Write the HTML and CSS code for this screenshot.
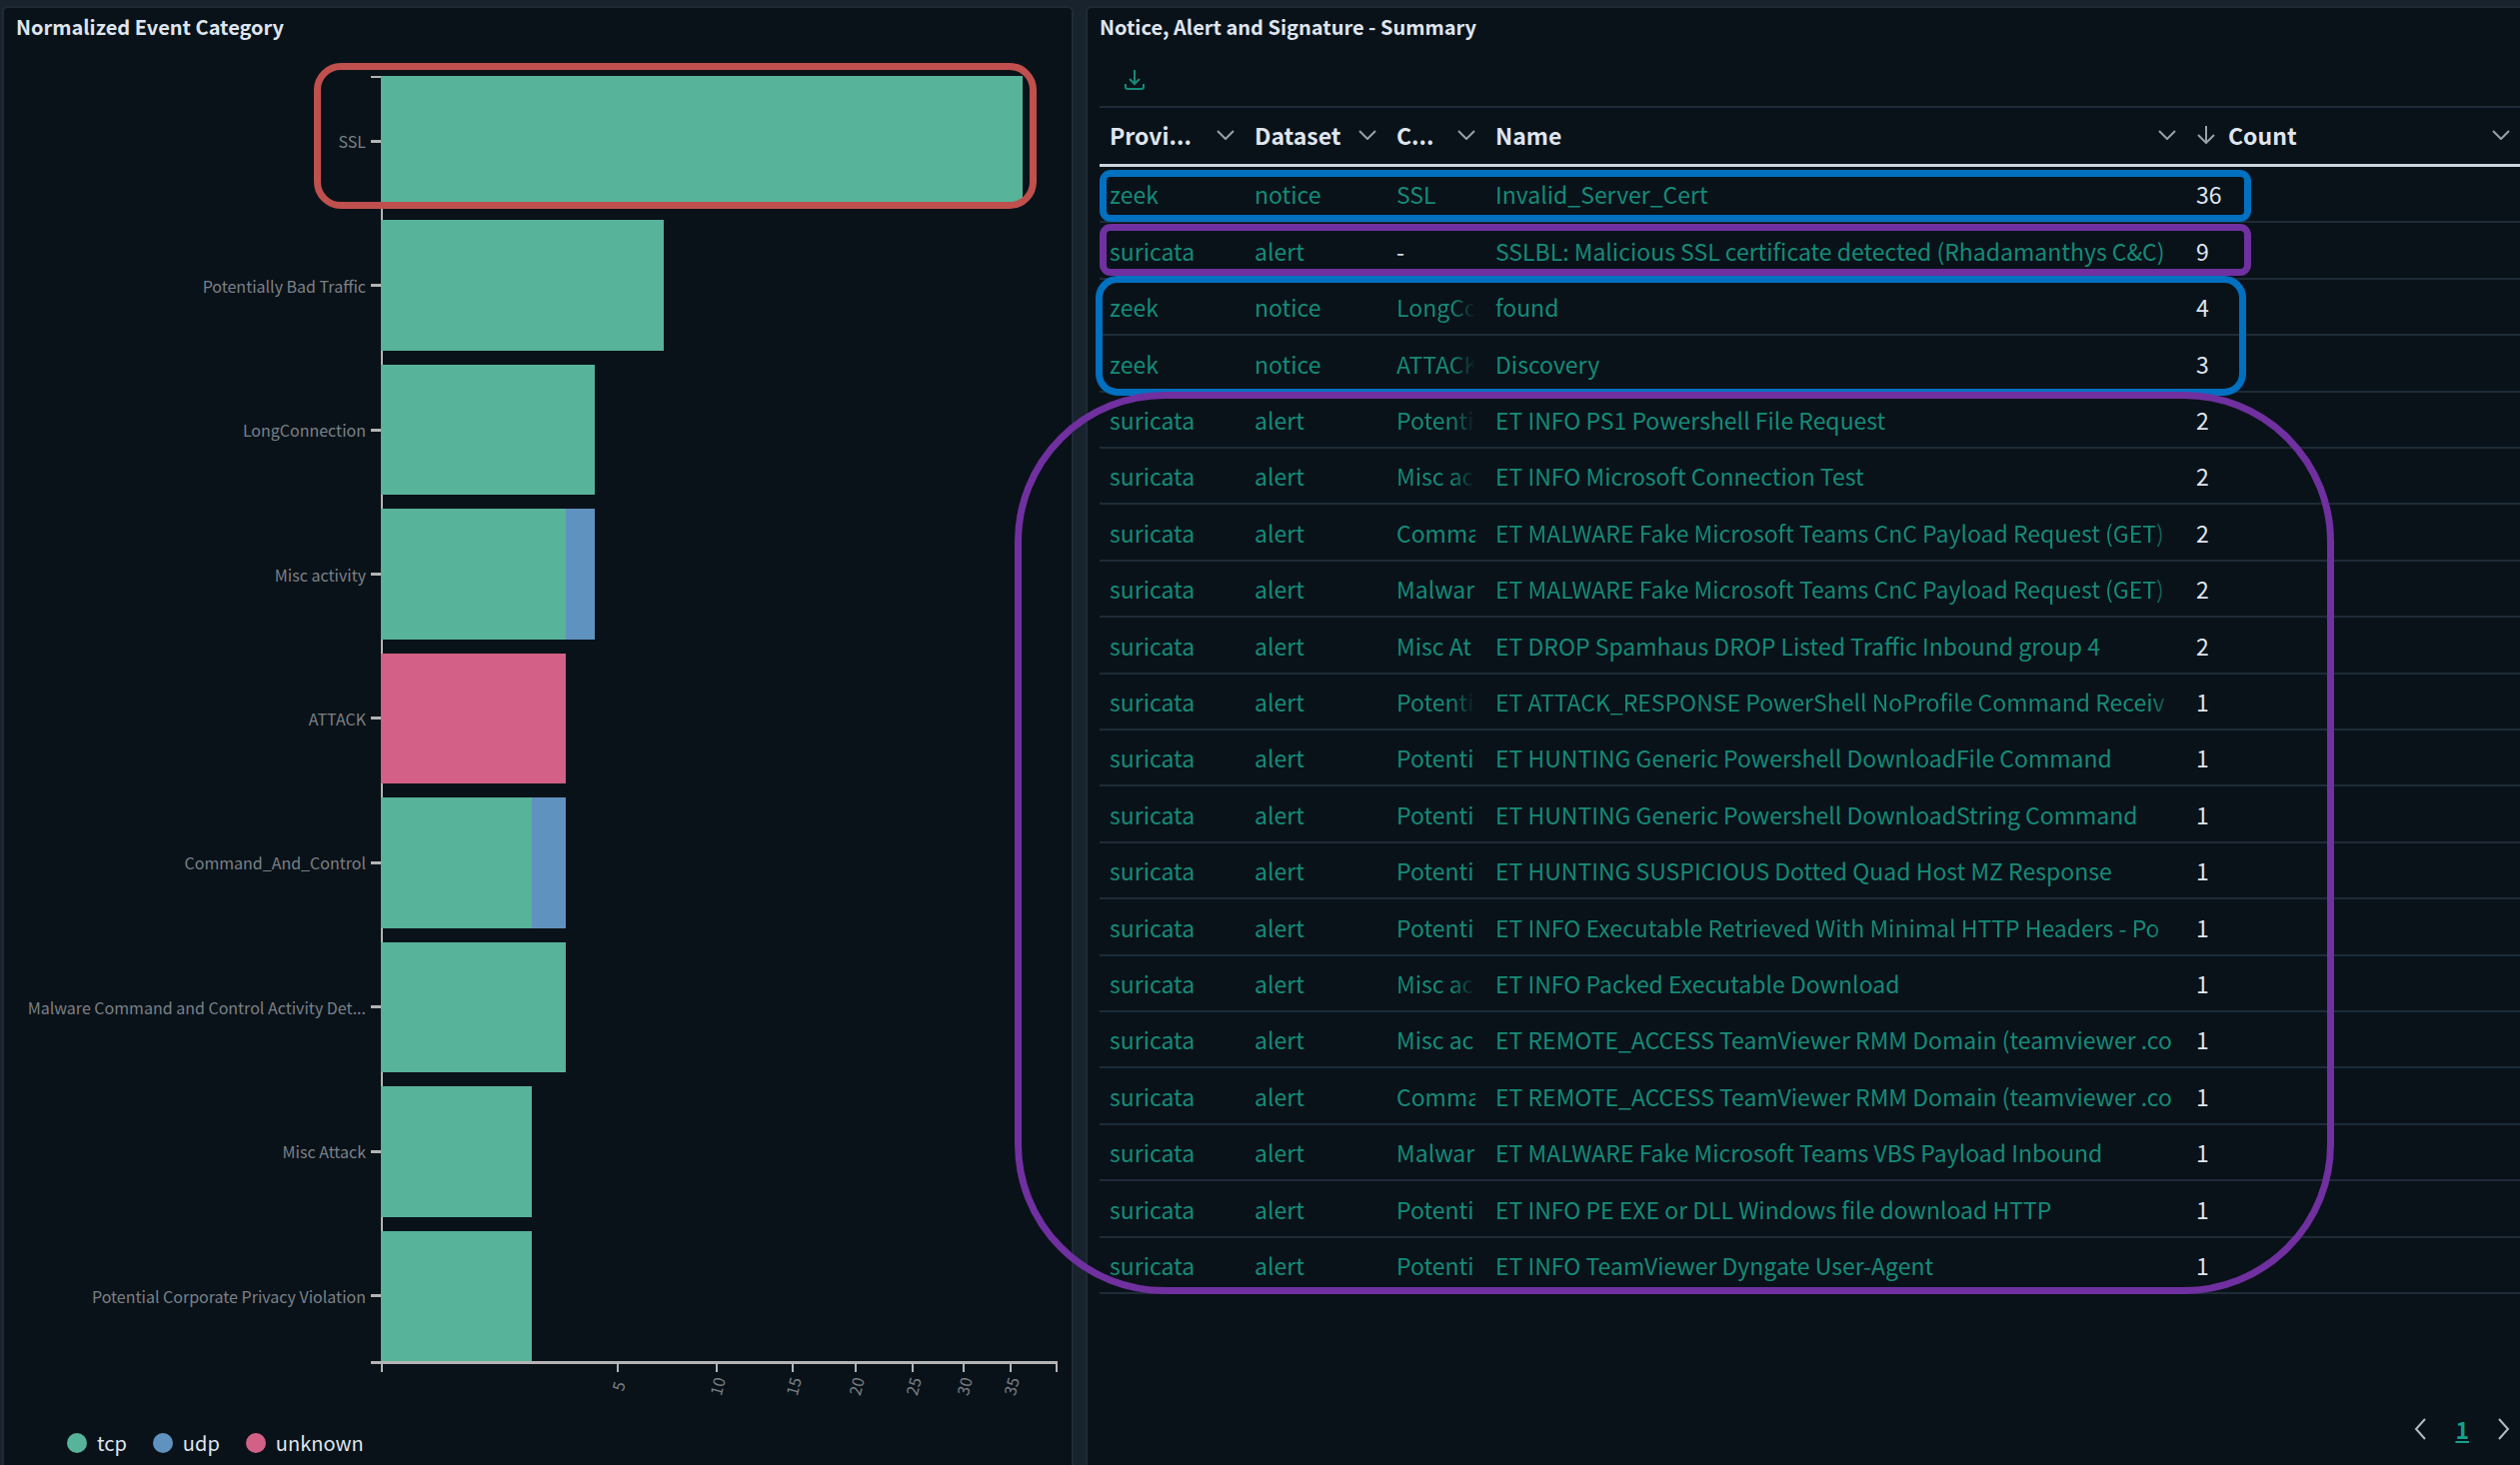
FILE: index.html
```html
<!DOCTYPE html>
<html lang="en">
<head>
<meta charset="utf-8">
<title>Event dashboard</title>
<meta name="viewport" content="width=device-width, initial-scale=1">
<link rel="stylesheet" href="styles.css">
</head>
<body>
<svg class="sprite" aria-hidden="true">
  <symbol id="chevron" viewBox="0 0 18 10"><path d="M1 1l8 8 8-8" fill="none" stroke="currentColor" stroke-width="2"/></symbol>
</svg>
<main class="dashboard">
  <section class="panel">
    <h2 class="panel-title">Normalized Event Category</h2>
    <div class="chart">
      <div class="plot">
        <div class="row"><span class="label">SSL</span><div class="track"><i class="bar tcp" style="width:94.8%"></i></div></div>
        <div class="row"><span class="label">Potentially Bad Traffic</span><div class="track"><i class="bar tcp" style="width:41.8%"></i></div></div>
        <div class="row"><span class="label">LongConnection</span><div class="track"><i class="bar tcp" style="width:31.6%"></i></div></div>
        <div class="row"><span class="label">Misc activity</span><div class="track"><i class="bar tcp" style="width:27.3%"></i><i class="bar udp" style="width:4.3%"></i></div></div>
        <div class="row"><span class="label">ATTACK</span><div class="track"><i class="bar unknown" style="width:27.3%"></i></div></div>
        <div class="row"><span class="label">Command_And_Control</span><div class="track"><i class="bar tcp" style="width:22.3%"></i><i class="bar udp" style="width:5%"></i></div></div>
        <div class="row"><span class="label">Malware Command and Control Activity Det...</span><div class="track"><i class="bar tcp" style="width:27.3%"></i></div></div>
        <div class="row"><span class="label">Misc Attack</span><div class="track"><i class="bar tcp" style="width:22.3%"></i></div></div>
        <div class="row"><span class="label">Potential Corporate Privacy Violation</span><div class="track"><i class="bar tcp" style="width:22.3%"></i></div></div>
        <div class="mark mark-red"></div>
      </div>
      <div class="axis">
        <span class="tick"><b>5</b></span><span class="tick"><b>10</b></span><span class="tick"><b>15</b></span><span class="tick"><b>20</b></span><span class="tick"><b>25</b></span><span class="tick"><b>30</b></span><span class="tick"><b>35</b></span><span class="tick"></span>
      </div>
    </div>
    <ul class="legend">
      <li><i class="dot tcp"></i>tcp</li>
      <li><i class="dot udp"></i>udp</li>
      <li><i class="dot unknown"></i>unknown</li>
    </ul>
  </section>

  <section class="panel panel-table">
    <h2 class="panel-title">Notice, Alert and Signature - Summary</h2>
    <div class="toolbar">
      <button class="icon-button" type="button" aria-label="Download">
        <svg width="20" height="20" viewBox="0 0 20 20" fill="none" stroke="currentColor" stroke-width="2"><path d="M10 0v13M5 9l5 5 5-5M1 14v3q0 2 2 2h14q2 0 2-2v-3"/></svg>
      </button>
    </div>
    <div class="grid">
      <table>
        <colgroup><col class="c-provider"><col class="c-dataset"><col class="c-category"><col class="c-name"><col></colgroup>
        <thead>
          <tr>
            <th scope="col"><div class="head">Provi...<button type="button" aria-label="Provider options"><svg width="18" height="10"><use href="#chevron"/></svg></button></div></th>
            <th scope="col"><div class="head">Dataset<button type="button" aria-label="Dataset options"><svg width="18" height="10"><use href="#chevron"/></svg></button></div></th>
            <th scope="col"><div class="head">C...<button type="button" aria-label="Category options"><svg width="18" height="10"><use href="#chevron"/></svg></button></div></th>
            <th scope="col"><div class="head">Name<button type="button" aria-label="Name options"><svg width="18" height="10"><use href="#chevron"/></svg></button></div></th>
            <th scope="col"><div class="head"><svg class="sort" width="20" height="18" viewBox="0 0 20 18" fill="none" stroke="currentColor" stroke-width="2"><path d="M10 0v16M2 9l8 8 8-8"/></svg>Count<button type="button" aria-label="Count options"><svg width="18" height="10"><use href="#chevron"/></svg></button></div></th>
          </tr>
        </thead>
        <tbody>
          <tr><td><a href="#">zeek</a></td><td><a href="#">notice</a></td><td><a href="#">SSL</a></td><td><a href="#">Invalid_Server_Cert</a></td><td>36</td></tr>
          <tr><td><a href="#">suricata</a></td><td><a href="#">alert</a></td><td>-</td><td><a href="#">SSLBL: Malicious SSL certificate detected (Rhadamanthys C&amp;C)</a></td><td>9</td></tr>
          <tr><td><a href="#">zeek</a></td><td><a href="#">notice</a></td><td><a class="fade" href="#">LongCo</a></td><td><a href="#">found</a></td><td>4</td></tr>
          <tr><td><a href="#">zeek</a></td><td><a href="#">notice</a></td><td><a class="fade" href="#">ATTACK</a></td><td><a href="#">Discovery</a></td><td>3</td></tr>
          <tr><td><a href="#">suricata</a></td><td><a href="#">alert</a></td><td><a class="fade" href="#">Potenti</a></td><td><a href="#">ET INFO PS1 Powershell File Request</a></td><td>2</td></tr>
          <tr><td><a href="#">suricata</a></td><td><a href="#">alert</a></td><td><a class="fade" href="#">Misc ac</a></td><td><a href="#">ET INFO Microsoft Connection Test</a></td><td>2</td></tr>
          <tr><td><a href="#">suricata</a></td><td><a href="#">alert</a></td><td><a href="#">Comma</a></td><td><a class="fade" href="#">ET MALWARE Fake Microsoft Teams CnC Payload Request (GET)</a></td><td>2</td></tr>
          <tr><td><a href="#">suricata</a></td><td><a href="#">alert</a></td><td><a href="#">Malwar</a></td><td><a class="fade" href="#">ET MALWARE Fake Microsoft Teams CnC Payload Request (GET)</a></td><td>2</td></tr>
          <tr><td><a href="#">suricata</a></td><td><a href="#">alert</a></td><td><a href="#">Misc At</a></td><td><a href="#">ET DROP Spamhaus DROP Listed Traffic Inbound group 4</a></td><td>2</td></tr>
          <tr><td><a href="#">suricata</a></td><td><a href="#">alert</a></td><td><a class="fade" href="#">Potenti</a></td><td><a class="fade" href="#">ET ATTACK_RESPONSE PowerShell NoProfile Command Receiv</a></td><td>1</td></tr>
          <tr><td><a href="#">suricata</a></td><td><a href="#">alert</a></td><td><a href="#">Potenti</a></td><td><a href="#">ET HUNTING Generic Powershell DownloadFile Command</a></td><td>1</td></tr>
          <tr><td><a href="#">suricata</a></td><td><a href="#">alert</a></td><td><a href="#">Potenti</a></td><td><a href="#">ET HUNTING Generic Powershell DownloadString Command</a></td><td>1</td></tr>
          <tr><td><a href="#">suricata</a></td><td><a href="#">alert</a></td><td><a href="#">Potenti</a></td><td><a href="#">ET HUNTING SUSPICIOUS Dotted Quad Host MZ Response</a></td><td>1</td></tr>
          <tr><td><a href="#">suricata</a></td><td><a href="#">alert</a></td><td><a href="#">Potenti</a></td><td><a class="fade" href="#">ET INFO Executable Retrieved With Minimal HTTP Headers - Po</a></td><td>1</td></tr>
          <tr><td><a href="#">suricata</a></td><td><a href="#">alert</a></td><td><a class="fade" href="#">Misc ac</a></td><td><a href="#">ET INFO Packed Executable Download</a></td><td>1</td></tr>
          <tr><td><a href="#">suricata</a></td><td><a href="#">alert</a></td><td><a href="#">Misc ac</a></td><td><a href="#">ET REMOTE_ACCESS TeamViewer RMM Domain (teamviewer .co</a></td><td>1</td></tr>
          <tr><td><a href="#">suricata</a></td><td><a href="#">alert</a></td><td><a href="#">Comma</a></td><td><a href="#">ET REMOTE_ACCESS TeamViewer RMM Domain (teamviewer .co</a></td><td>1</td></tr>
          <tr><td><a href="#">suricata</a></td><td><a href="#">alert</a></td><td><a href="#">Malwar</a></td><td><a href="#">ET MALWARE Fake Microsoft Teams VBS Payload Inbound</a></td><td>1</td></tr>
          <tr><td><a href="#">suricata</a></td><td><a href="#">alert</a></td><td><a href="#">Potenti</a></td><td><a href="#">ET INFO PE EXE or DLL Windows file download HTTP</a></td><td>1</td></tr>
          <tr><td><a href="#">suricata</a></td><td><a href="#">alert</a></td><td><a href="#">Potenti</a></td><td><a href="#">ET INFO TeamViewer Dyngate User-Agent</a></td><td>1</td></tr>
        </tbody>
      </table>
      <div class="mark mark-zeek-ssl"></div>
      <div class="mark mark-suricata-ssl"></div>
      <div class="mark mark-zeek"></div>
      <div class="mark mark-suricata"></div>
    </div>
    <nav class="pager" aria-label="Pages">
      <button class="icon-button" type="button" aria-label="Previous page"><svg width="12" height="22" viewBox="0 0 12 22" fill="none" stroke="currentColor" stroke-width="2"><path d="M11 1L2 11l9 10"/></svg></button>
      <a href="#">1</a>
      <button class="icon-button" type="button" aria-label="Next page"><svg width="12" height="22" viewBox="0 0 12 22" fill="none" stroke="currentColor" stroke-width="2"><path d="M1 1l9 10-9 10"/></svg></button>
    </nav>
  </section>
</main>
</body>
</html>
```

FILE: styles.css
```css
:root {
  --page: #18232e;
  --panel: #0a1219;
  --line: #1e2b37;
  --text: #dfe5ef;
  --link: #158a78;
  --axis: #b4b4b4;
  --tcp: #57b39a;
  --udp: #6092c0;
  --unknown: #d36086;
}

* { box-sizing: border-box; }

body {
  margin: 0;
  background: var(--page);
  color: var(--text);
  font-family: "Noto Sans CJK SC", "Noto Sans", sans-serif;
  font-size: 23px;
  line-height: 32px;
}

button {
  padding: 0;
  border: 0;
  background: none;
  color: inherit;
  font: inherit;
}

svg { display: block; }
.sprite { position: absolute; width: 0; height: 0; }

.dashboard {
  display: grid;
  grid-template-columns: minmax(0, 1072fr) minmax(0, 1435fr);
  gap: 12px;
  min-height: 100vh;
  padding: 6px 0 0 2px;
}

.panel {
  display: flex;
  flex-direction: column;
  background: var(--panel);
  border: 2px solid var(--line);
  border-bottom: 0;
  border-radius: 6px 6px 0 0;
}

.panel-table {
  padding-left: 12px;
  border-right: 0;
  border-top-right-radius: 0;
}

.panel-title {
  margin: 0;
  padding-left: 12px;
  font-size: 20px;
  font-weight: 700;
  line-height: 38px;
}

.panel-table .panel-title { padding-left: 0; }

/* Chart */
.chart {
  display: flex;
  flex: 1;
  flex-direction: column;
  padding: 30px 14px 0 12px;
}

.plot {
  position: relative;
  display: flex;
  flex: 1;
  flex-direction: column;
  gap: 14px;
}

.plot::before {
  content: "";
  position: absolute;
  top: 0;
  bottom: 0;
  left: 355px;
  width: 12px;
  border: solid var(--axis);
  border-width: 2px 0 0;
}

.plot::after {
  content: "";
  position: absolute;
  top: 0;
  bottom: 0;
  left: 365px;
  width: 2px;
  background: var(--axis);
}

.row {
  display: flex;
  flex: 1;
  align-items: center;
}

.label {
  display: flex;
  flex: 0 0 365px;
  align-items: center;
  justify-content: flex-end;
  gap: 5px;
  color: #7b8086;
  font-size: 16px;
  line-height: 20px;
  white-space: nowrap;
}

.label::after {
  content: "";
  width: 10px;
  height: 3px;
  background: var(--axis);
}

.track {
  position: relative;
  z-index: 1;
  display: flex;
  flex: 1;
  align-self: stretch;
}

.tcp { background: var(--tcp); }
.udp { background: var(--udp); }
.unknown { background: var(--unknown); }

.axis {
  display: grid;
  grid-template-columns: 237fr 99fr 76fr 63fr 56fr 51fr 47fr 46fr;
  margin-left: 355px;
  padding-left: 10px;
  border-top: 3px solid var(--axis);
}

.tick {
  display: flex;
  justify-content: flex-end;
  height: 36px;
  padding-top: 12px;
  background: linear-gradient(var(--axis), var(--axis)) right top / 2px 8px no-repeat;
}

.tick:first-child {
  background:
    linear-gradient(var(--axis), var(--axis)) right top / 2px 8px no-repeat,
    linear-gradient(var(--axis), var(--axis)) left top / 2px 8px no-repeat;
}

.tick b {
  width: 24px;
  height: 20px;
  margin-right: -11px;
  color: #7b8086;
  font-size: 16px;
  font-weight: 400;
  line-height: 20px;
  text-align: center;
  transform: rotate(-75deg);
}

.legend {
  display: flex;
  gap: 26px;
  margin: 27px 0 6px;
  padding: 0 0 0 63px;
  font-size: 20px;
  line-height: 32px;
  list-style: none;
}

.legend li {
  display: flex;
  align-items: center;
  gap: 10px;
}

.dot {
  width: 20px;
  height: 20px;
  border-radius: 50%;
}

/* Table */
.toolbar { padding: 24px 0 0 25px; }

.icon-button { display: block; }
.toolbar .icon-button { color: var(--link); }

.grid {
  position: relative;
  margin-top: 16px;
  border-top: 2px solid var(--line);
}

table {
  width: 100%;
  border-collapse: separate;
  border-spacing: 0;
  table-layout: fixed;
}

.c-provider { width: 145px; }
.c-dataset { width: 142px; }
.c-category { width: 99px; }
.c-name { width: 701px; }

th, td {
  padding: 0 10px;
  overflow: hidden;
  text-align: left;
  white-space: nowrap;
}

th {
  height: 59px;
  padding-bottom: 2px;
  border-bottom: 3px solid #cdd3de;
  font-weight: 700;
}

td {
  height: 56px;
  border-bottom: 2px solid var(--line);
}

tr:nth-child(5n + 2) td,
tr:nth-child(5n + 4) td { height: 57px; }

.head {
  display: flex;
  align-items: center;
}

.head button {
  margin-left: auto;
  color: #98a0a9;
}

.sort {
  margin-right: 12px;
  color: #98a0a9;
}

a {
  color: var(--link);
  text-decoration: none;
}

td a {
  display: block;
  overflow: hidden;
}

.fade {
  -webkit-mask-image: linear-gradient(to left, transparent, #000 24px);
  mask-image: linear-gradient(to left, transparent, #000 24px);
}

.pager {
  display: flex;
  align-items: center;
  gap: 29px;
  justify-content: flex-end;
  margin-top: auto;
  padding: 0 10px 20px 0;
  color: #b4bac2;
}

.pager a {
  color: #16a08a;
  font-weight: 700;
  text-decoration: underline;
}

/* Analyst highlights drawn over the chart and the table */
.mark {
  position: absolute;
  z-index: 2;
  border: 7px solid;
  pointer-events: none;
}

.mark-red {
  top: -13px;
  right: 21px;
  left: 298px;
  height: 146px;
  border-color: #c0504d;
  border-radius: 27px;
}

.mark-zeek-ssl {
  top: 62px;
  left: 0;
  width: 1152px;
  height: 52px;
  border-color: #0070c0;
  border-radius: 11px;
}

.mark-suricata-ssl {
  top: 116px;
  left: 0;
  width: 1152px;
  height: 52px;
  border-color: #7030a0;
  border-radius: 11px;
}

.mark-zeek {
  top: 168px;
  left: -4px;
  width: 1151px;
  height: 120px;
  border-color: #0070c0;
  border-radius: 22px;
}

.mark-suricata {
  top: 284px;
  left: -85px;
  width: 1320px;
  height: 903px;
  border-color: #7030a0;
  border-radius: 150px;
}
```
